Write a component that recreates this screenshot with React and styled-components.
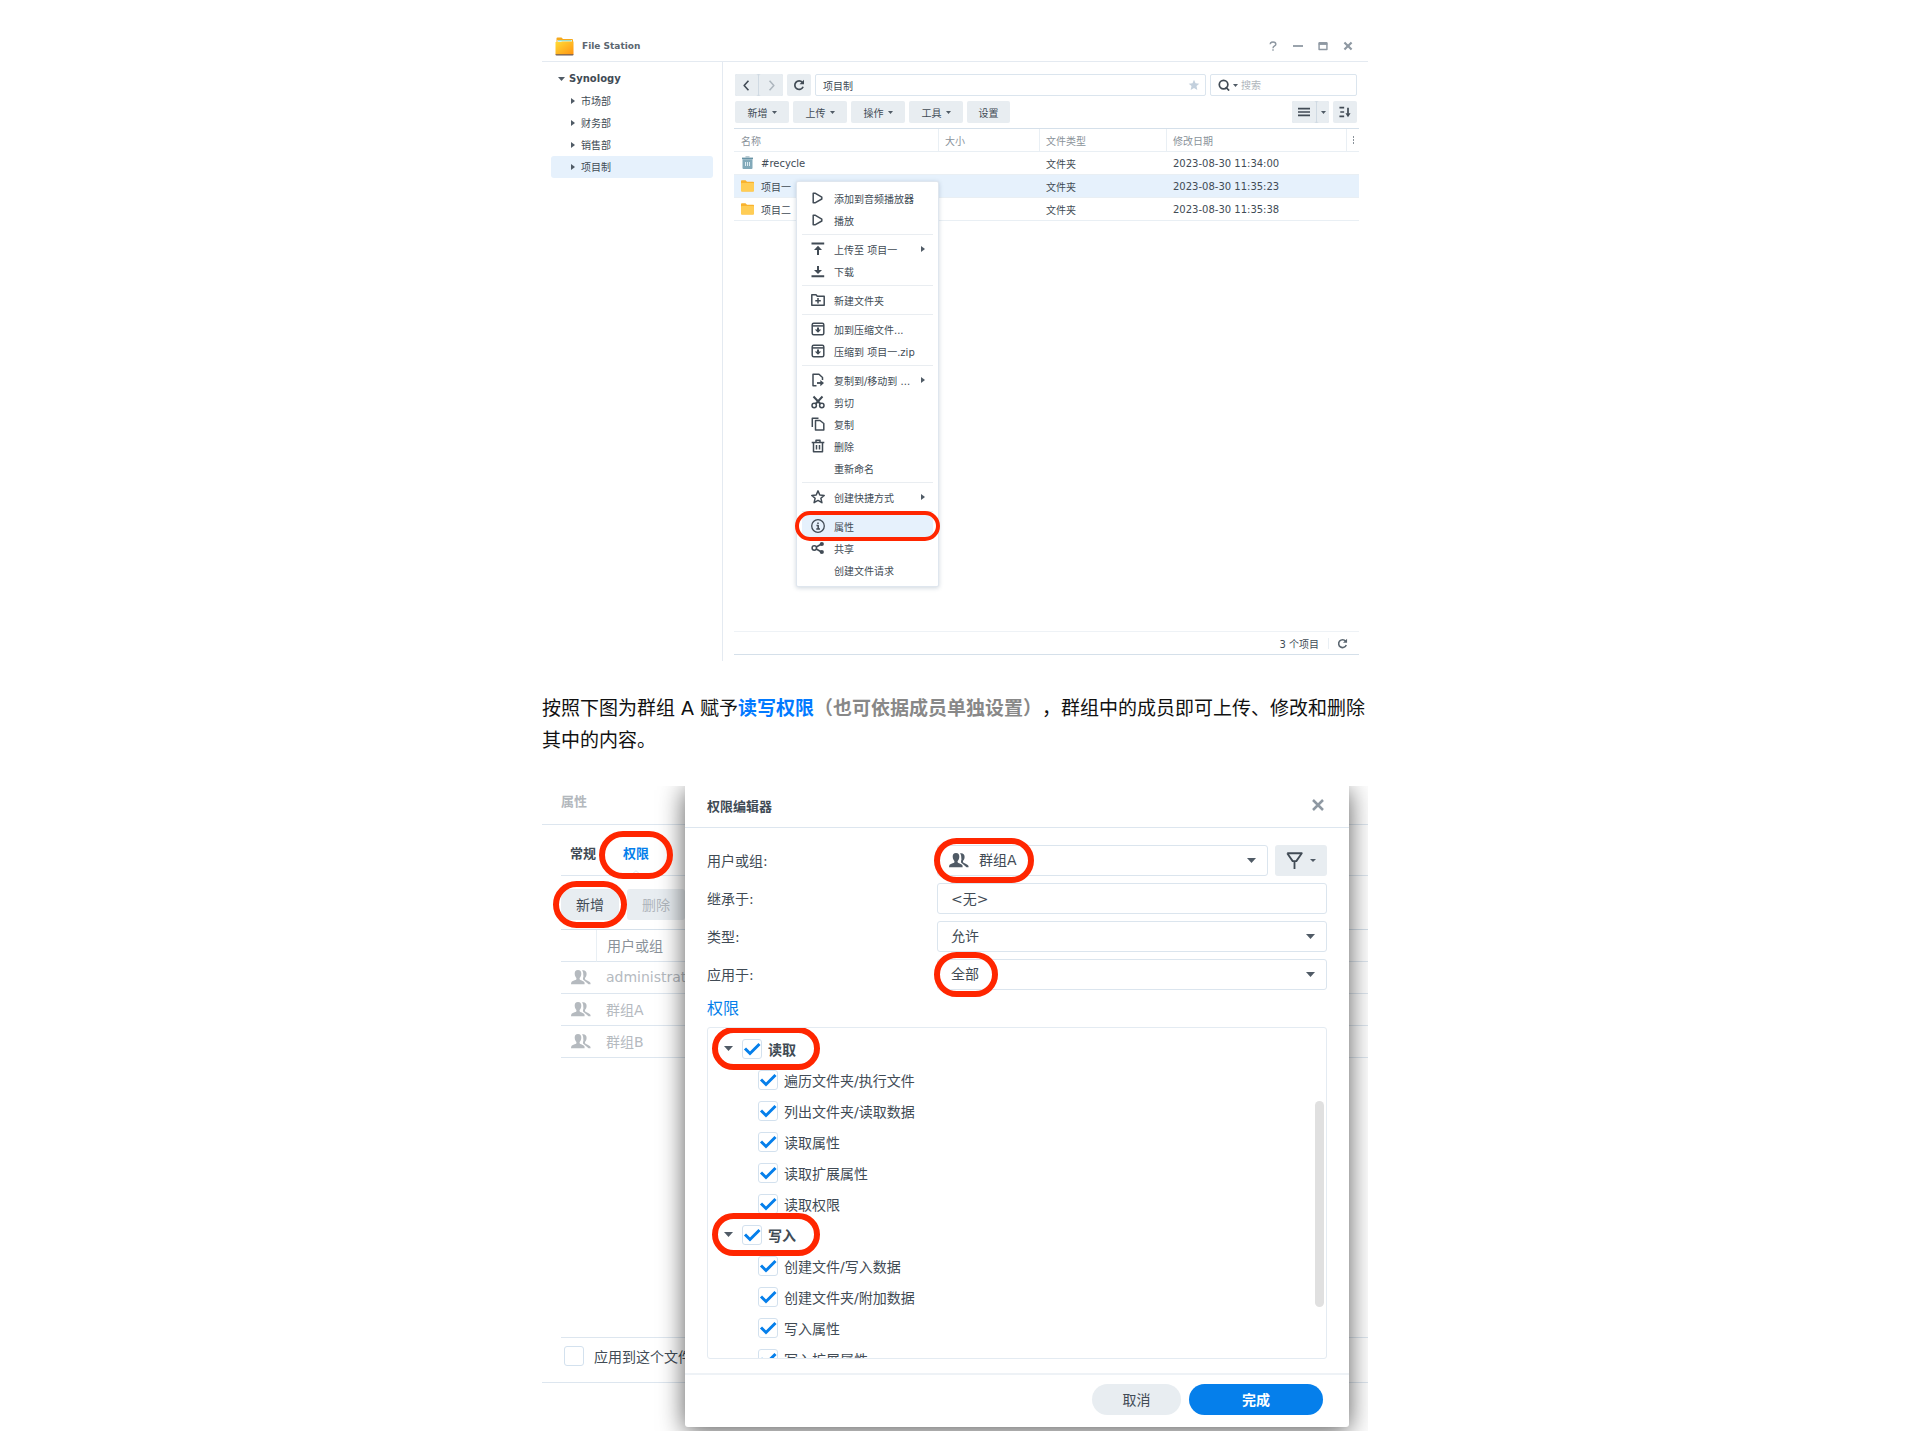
import React from 'react';
import styled, { createGlobalStyle, css } from 'styled-components';

const GlobalStyle = createGlobalStyle`
  * {
    box-sizing: border-box;
  }

  body {
    margin: 0;
    background: #fff;
    color: #414b55;
    font-family: 'DejaVu Sans', 'Noto Sans CJK SC', sans-serif;
    font-size: 10px;
  }

  button,
  input,
  select {
    margin: 0;
    padding: 0;
    border: 0;
    background: none;
    color: inherit;
    font: inherit;
  }

  svg {
    display: block;
    flex: none;
  }
`;

const Page = styled.div`
  padding: 31px 4px 22px 0;
`;

const Article = styled.main`
  max-width: 826px;
  margin: 0 auto;
`;

const Paragraph = styled.p`
  margin: 31px 0 30px;
  color: #111;
  font-size: 19px;
  line-height: 32px;
  text-spacing-trim: space-all;
`;

const Blue = styled.strong`
  color: #027aff;
`;

const Grey = styled.strong`
  color: #888;
`;

const Ring = styled.span`
  position: absolute;
  z-index: 2;
  inset: ${({ $inset }) => $inset};
  width: ${({ $width }) => $width || 'auto'};
  border: ${({ $thin }) => ($thin ? 4 : 6)}px solid #ff2600;
  border-radius: 24px;
  pointer-events: none;
`;

/* ---------- File Station window ---------- */

const Window = styled.section`
  display: flex;
  flex-direction: column;
`;

const TitleBar = styled.header`
  display: flex;
  align-items: center;
  height: 31px;
  padding: 0 15px 0 13px;
  border-bottom: 1px solid #e4eaf1;
`;

const WindowTitle = styled.h2`
  flex: 1;
  margin: 0 0 0 8px;
  color: #5b6670;
  font-size: 9px;
`;

const WindowButtons = styled.div`
  display: flex;
  gap: 15px;
`;

const IconButton = styled.button`
  display: flex;
  align-items: center;
  justify-content: center;
  color: #8e98a2;
`;

const WindowBody = styled.div`
  display: flex;
  min-height: 599px;
`;

const Sidebar = styled.nav`
  width: 181px;
  padding: 6px 9px;
  border-right: 1px solid #e4eaf1;
`;

const TreeRow = styled.a`
  display: flex;
  align-items: center;
  gap: 6px;
  height: 22px;
  padding: 0 0 1px 20px;
  border-radius: 3px;
  background: ${({ $active }) => ($active ? '#e6f1fc' : 'transparent')};
  color: inherit;
  text-decoration: none;
`;

const TreeRoot = styled(TreeRow)`
  gap: 4px;
  padding-left: 7px;
  font-weight: bold;
`;

const FilePane = styled.div`
  position: relative;
  display: flex;
  flex: 1;
  flex-direction: column;
  padding: 12px 9px 6px 11px;
`;

const Toolbar = styled.div`
  display: flex;
  gap: 4px;
  margin: 0 2px 5px 1px;
`;

const ToolButton = styled.button`
  display: flex;
  align-items: center;
  justify-content: center;
  gap: 4px;
  width: ${({ $width }) => $width}px;
  height: 22px;
  border-radius: 2px;
  background: #e8edf1;
`;

const ButtonGroup = styled.div`
  display: flex;
  gap: 1px;
  border-radius: 2px;
  background: #d0dae3;
`;

const Spacer = styled.span`
  flex: 1;
`;

const AddressBox = styled.label`
  display: flex;
  flex: 1;
  align-items: center;
  min-width: 0;
  height: 22px;
  padding: 0 5px 0 7px;
  border: 1px solid #dbe5ee;
  border-radius: 2px;

  input {
    flex: 1;
    min-width: 0;
  }
`;

const SearchBox = styled(AddressBox)`
  flex: 0 0 147px;
  gap: 3px;

  input::placeholder {
    color: #b0b6bc;
  }
`;

const FileTable = styled.table`
  width: 100%;
  border-top: 1px solid #d5e0ea;
  border-spacing: 0;
  table-layout: fixed;

  th,
  td {
    height: 23px;
    padding: 0 0 0 7px;
    border-bottom: 1px solid #e9eff4;
    text-align: left;
  }

  th {
    color: #8a929a;
    font-weight: normal;
  }

  th + th {
    padding-left: 6px;
    border-left: 1px solid #e9eff4;
  }
`;

const FileRow = styled.tr`
  background: ${({ $active }) => ($active ? '#e6f1fc' : 'transparent')};
`;

const NameCell = styled.div`
  display: flex;
  align-items: center;
  gap: 7px;
`;

const StatusBar = styled.footer`
  display: flex;
  align-items: center;
  justify-content: flex-end;
  height: 24px;
  margin-top: auto;
  padding-right: 11px;
  border-top: 1px solid #eef2f6;
  border-bottom: 1px solid #d5e0ea;

  button {
    margin-left: 9px;
    padding-left: 8px;
    border-left: 1px solid #e9eff4;
    color: #5b6670;
  }
`;

/* ---------- context menu ---------- */

const Menu = styled.div`
  position: absolute;
  top: 119px;
  left: 73px;
  width: 143px;
  padding: 5px;
  border: 1px solid #dfe6ee;
  border-radius: 2px;
  background: #fff;
  box-shadow: 0 1px 4px rgba(60, 90, 120, 0.25);
`;

const MenuItem = styled.button`
  position: relative;
  display: flex;
  align-items: center;
  width: 100%;
  height: 22px;
  padding: 0 8px 0 9px;
  background: ${({ $active }) => ($active ? '#e6f1fc' : 'transparent')};
  text-align: left;
`;

const MenuIcon = styled.span`
  width: 14px;
  margin-right: 9px;
`;

const MenuLabel = styled.span`
  flex: 1;
  white-space: nowrap;
`;

const Divider = styled.hr`
  height: 1px;
  margin: 3px 0;
  border: 0;
  background: #e9edf1;
`;

/* ---------- property dialogs ---------- */

const Stage = styled.section`
  position: relative;
  display: flex;
  flex-direction: column;
  min-height: 645px;
  overflow: hidden;
  font-size: 14px;
`;

const BackTitle = styled.h3`
  height: 39px;
  margin: 0;
  padding: 0 19px;
  border-bottom: 1px solid #dde6ef;
  color: #b3b8bd;
  font-size: 13px;
  line-height: 32px;
`;

const Tabs = styled.div`
  display: flex;
  gap: 27px;
  height: 51px;
  margin-left: 19px;
  padding-left: 9px;
  border-bottom: 1px solid #dde6ef;
`;

const Tab = styled.button`
  position: relative;
  padding-top: 5px;
  font-size: 13px;
  font-weight: bold;
  color: ${({ $active }) => ($active ? '#057feb' : 'inherit')};
`;

const Notch = styled.svg`
  position: absolute;
  bottom: -1px;
  left: calc(50% - 6px);
`;

const BackTools = styled.div`
  display: flex;
  gap: 8px;
  margin: 13px 0 9px 19px;
`;

const BackButton = styled.button`
  position: relative;
  height: 31px;
  padding: 0 15px 2px;
  border-radius: 3px;
  background: #e8edf1;

  &:disabled {
    color: #b0b6bc;
  }
`;

const GroupTable = styled.table`
  margin-left: 19px;
  border-top: 1px solid #d5e0ea;
  border-spacing: 0;

  th,
  td {
    height: 32px;
    padding: 0 10px 1px;
    border-bottom: 1px solid #dde6ef;
    color: #b5babf;
    text-align: left;
    font-weight: normal;
  }

  th {
    color: #8a929a;
  }

  th:first-child,
  td:first-child {
    width: 35px;
    padding-right: 5px;
  }

  th + th {
    border-left: 1px solid #e9eff4;
  }
`;

const ApplyRow = styled.div`
  margin-top: auto;
  margin-bottom: 48px;
  padding-left: 19px;
  border-bottom: 1px solid #dde6ef;
`;

const ApplyLabel = styled.label`
  display: flex;
  align-items: center;
  gap: 10px;
  padding: 8px 3px 16px;
  border-top: 1px solid #dde6ef;
`;

const Editor = styled.form`
  position: absolute;
  top: 0;
  right: 19px;
  bottom: 4px;
  left: 143px;
  display: flex;
  flex-direction: column;
  border-radius: 0 0 3px 3px;
  background: #fff;
  box-shadow: 0 4px 26px rgba(0, 0, 0, 0.65);
`;

const EditorHeader = styled.header`
  display: flex;
  align-items: center;
  justify-content: space-between;
  height: 42px;
  padding: 0 24px 3px 22px;
  border-bottom: 1px solid #dde6ef;

  h3 {
    margin: 0;
    font-size: 13px;
  }
`;

const Fields = styled.div`
  display: grid;
  grid-template-columns: 230px 1fr;
  row-gap: 7px;
  align-items: center;
  padding: 17px 22px 0;

  > label {
    padding-bottom: 2px;
  }
`;

const FieldRow = styled.div`
  display: flex;
  gap: 7px;
`;

const Field = styled.div`
  position: relative;
  flex: 1;

  input,
  select {
    width: 100%;
    height: 31px;
    padding: 0 0 1px ${({ $icon }) => ($icon ? 41 : 13)}px;
    border: 1px solid #dbe5ee;
    border-radius: 3px;
    appearance: none;
  }
`;

const FieldIcon = styled.span`
  position: absolute;
  top: 8px;
  left: 12px;
`;

const FieldCaret = styled.span`
  position: absolute;
  top: 13px;
  right: 12px;
`;

const FilterButton = styled.button`
  display: flex;
  align-items: center;
  justify-content: center;
  gap: 7px;
  width: 52px;
  height: 31px;
  border-radius: 3px;
  background: #e8edf1;
`;

const Heading = styled.h4`
  margin: 7px 22px 6px;
  color: #057feb;
  font-size: 16px;
  font-weight: normal;
  line-height: 24px;
`;

const PermissionBox = styled.div`
  position: relative;
  flex: 1;
  min-height: 0;
  margin: 0 22px 14px;
  padding-top: 5px;
  overflow: hidden;
  border: 1px solid #e4ebf2;
  border-radius: 3px;
`;

const PermissionRow = styled.div`
  position: relative;
  display: flex;
  align-items: center;
  height: 31px;
  padding-left: ${({ $child }) => ($child ? 50 : 16)}px;
  font-weight: ${({ $child }) => ($child ? 'normal' : 'bold')};

  label {
    display: flex;
    align-items: center;
    gap: 6px;
    margin-left: ${({ $child }) => ($child ? 0 : 9)}px;
  }
`;

const ScrollThumb = styled.span`
  position: absolute;
  top: 73px;
  right: 2px;
  width: 9px;
  height: 206px;
  border-radius: 5px;
  background: #e0e0e0;
`;

const CheckWrap = styled.span`
  position: relative;
  width: 20px;
  height: 20px;

  input {
    display: block;
    width: 20px;
    height: 20px;
    border: 1px solid #d3e1ee;
    border-radius: 3px;
    appearance: none;
  }

  svg {
    position: absolute;
    inset: 0;
    pointer-events: none;
  }
`;

const EditorFooter = styled.footer`
  display: flex;
  gap: 8px;
  justify-content: flex-end;
  padding: 9px 26px 12px;
  border-top: 2px solid #eef2f6;
`;

const PillButton = styled.button`
  width: 89px;
  height: 31px;
  padding-bottom: 1px;
  border-radius: 16px;
  background: #e8edf1;

  ${({ $primary }) => $primary && css`
    width: 134px;
    background: #057feb;
    color: #fff;
    font-weight: bold;
  `}
`;

/* ---------- icons ---------- */

const Caret = ({ size = 5, right }) => {
  const depth = Math.ceil(size / 2);

  return right ? (
    <svg width="4" height="6" viewBox="0 0 4 6">
      <path d="M0 0L4 3L0 6Z" fill="#505b66" />
    </svg>
  ) : (
    <svg width={size} height={depth} viewBox="0 0 8 4" preserveAspectRatio="none">
      <path d="M0 0H8L4 4Z" fill="#505b66" />
    </svg>
  );
};

const Glyph = ({ size = 14, width = 1.5, children }) => (
  <svg width={size} height={size} viewBox="0 0 14 14" fill="none" stroke="currentColor" strokeWidth={width} strokeLinejoin="round">
    {children}
  </svg>
);

const ReloadIcon = ({ size = 12 }) => (
  <Glyph size={size} width={2}>
    <path d="M11 4A5 5 0 1 0 11.8 9" />
    <path d="M12.8 1v5.2H7.6z" fill="currentColor" stroke="none" />
  </Glyph>
);

const CloseIcon = ({ size, width = 3 }) => (
  <Glyph size={size} width={width}><path d="M2 2L12 12M12 2L2 12" /></Glyph>
);

const PeopleIcon = ({ color = '#505b66' }) => (
  <svg width="20" height="15" viewBox="0 0 20 15" fill={color}>
    <path d="M7 0C4.600 0 3.600 1.600 3.700 3.700C3.800 5.700 4.600 7.200 5.400 7.900V9.200C4.800 10.300 1 10.600 .3 12.400C0 13.200 0 14.300 0 14.300H13.600C13.600 14.300 13.700 12.900 13.300 12.100C12.500 10.700 9 10.200 8.600 9.200V7.900C9.500 7.200 10.300 5.600 10.300 3.700C10.400 1.500 9.400 0 7 0Z" />
    <path d="M11 .3C13.600-.3 15.700 .9 15.600 4C15.500 6.100 14.700 7.300 14 8V9C14.500 10.200 18.600 11.200 19.500 13V14.300H17.500L12 9.400V7.700C12.600 7.100 12.400 6 12.300 5C12.300 3 12 1.400 11 .3Z" />
  </svg>
);

const FolderIcon = () => (
  <svg width="13" height="12" viewBox="0 0 13 12">
    <path d="M0 1.200Q0 .3 .8 .3H4.500L6 1.800H12.300Q13 1.800 13 2.500V10Q13 11.500 12 11.500H1Q0 11.500 0 10Z" fill="#f9b32e" />
    <path d="M0 3.700Q0 3 .8 3H12.300Q13 3 13 3.700V10.500Q13 11.500 12 11.500H1Q0 11.500 0 10.500Z" fill="#ffcd55" />
  </svg>
);

const TrashCanIcon = () => (
  <svg width="13" height="14" viewBox="0 0 13 14">
    <path d="M4.500 .4H8.500V1.300H4.500Z" fill="#8ba9b6" />
    <path d="M1 1.600H12V3.200H1Z" fill="#6893a5" />
    <path d="M1.500 3.200H11.500V12Q11.500 13 10.500 13H2.500Q1.500 13 1.500 12Z" fill="#82a9b9" />
    <path d="M4.500 6V10M6.500 6V10M8.500 6V10" stroke="#dcebf1" />
  </svg>
);

const AppIcon = () => (
  <svg width="19" height="19" viewBox="0 0 19 19">
    <defs>
      <linearGradient id="folder" x1="0" y1="0" x2="1" y2="1">
        <stop offset="0" stopColor="#ffdc35" />
        <stop offset="1" stopColor="#ff9412" />
      </linearGradient>
    </defs>
    <path d="M1.500 1.500Q1.500 .5 2.500 .5H6.500L8 2H17Q18 2 18 3V7H1.500Z" fill="#f5a91d" />
    <path d="M2.500 3H17V7H2.500Z" fill="#fff" />
    <path d="M3 3.800H16.500" stroke="#6fd0b4" />
    <path d="M.5 17H18.500V17.500Q18.500 18.500 17.500 18.500H1.500Q.5 18.500 .5 17.500Z" fill="#6b5a59" />
    <path d="M.5 5H6L7 4.500H18.500V17.300H.5Z" fill="url(#folder)" />
  </svg>
);

const StarPath = 'M7 .9L8.800 5L13.200 5.400L9.900 8.300L10.900 12.700L7 10.400L3.100 12.700L4.100 8.300L.8 5.400L5.200 5Z';

const icons = {
  play: <path d="M2.200 2.200V11.800H4L10.800 8V6.200L4 2.200Z" />,
  upload: (
    <>
      <path d="M.5 1.500H13.200M7 13V7" strokeWidth="2" />
      <path d="M7 3.800L11 8H3Z" fill="currentColor" stroke="none" />
    </>
  ),
  download: (
    <>
      <path d="M.5 12.300H13.200M7 2V7" strokeWidth="2" />
      <path d="M7 10L3 6H11Z" fill="currentColor" stroke="none" />
    </>
  ),
  folder: (
    <>
      <path d="M.8 1.800H5L6.300 3.300H13.200V12.300H.8Z" />
      <path d="M7 5V10.500M4.300 7.800H9.800" />
    </>
  ),
  archive: (
    <>
      <rect x="1.200" y="1.300" width="11.600" height="11.500" rx="1.500" />
      <path d="M1.200 3.900H12.800" />
      <path d="M7 5.500V10" strokeWidth="2" />
      <path d="M7 10.800L3.800 7.500H10.200Z" fill="currentColor" stroke="none" />
    </>
  ),
  move: (
    <>
      <path d="M5.500 12.700H2V1.300H8L11.500 4.500V7" />
      <path d="M6 10H10" strokeWidth="1.800" />
      <path d="M9.300 6.900L13 10L9.300 13.200Z" fill="currentColor" stroke="none" />
    </>
  ),
  cut: (
    <>
      <circle cx="3.200" cy="10.500" r="2.200" />
      <circle cx="10.800" cy="10.500" r="2.200" />
      <path d="M2.500 1.500L9.500 9M11.500 1.500L4.500 9" strokeWidth="2" />
    </>
  ),
  copy: (
    <>
      <path d="M4.500 3.500H9L12.800 6.500V13H4.500Z" />
      <path d="M1.300 10V1.200H7.500" />
    </>
  ),
  trash: (
    <>
      <path d="M.7 3.500H13.300M5 3V1.300H9V3M2.500 3.500V12.700H11.500V3.500" />
      <path d="M5.500 6V10.500M8.500 6V10.500" />
    </>
  ),
  star: <path d={StarPath} />,
  info: (
    <>
      <circle cx="7" cy="7" r="6.300" strokeWidth="1.300" />
      <path d="M5.500 6.500H7.200V9.800M5.300 10H9M7 3.500V5" />
    </>
  ),
  share: (
    <>
      <circle cx="3.300" cy="7" r="2.200" />
      <path d="M5.300 6L10.500 3M5.300 8L10.500 11" />
      <circle cx="10.800" cy="3" r="2.100" fill="currentColor" stroke="none" />
      <circle cx="10.800" cy="11" r="2.100" fill="currentColor" stroke="none" />
    </>
  ),
};

/* ---------- data ---------- */

const menuGroups = [
  [{ icon: 'play', label: '添加到音频播放器' }, { icon: 'play', label: '播放' }],
  [{ icon: 'upload', label: '上传至 项目一', sub: true }, { icon: 'download', label: '下载' }],
  [{ icon: 'folder', label: '新建文件夹' }],
  [{ icon: 'archive', label: '加到压缩文件...' }, { icon: 'archive', label: '压缩到 项目一.zip' }],
  [
    { icon: 'move', label: '复制到/移动到 ...', sub: true },
    { icon: 'cut', label: '剪切' },
    { icon: 'copy', label: '复制' },
    { icon: 'trash', label: '删除' },
    { label: '重新命名' },
  ],
  [{ icon: 'star', label: '创建快捷方式', sub: true }],
  [{ icon: 'info', label: '属性', active: true }, { icon: 'share', label: '共享' }, { label: '创建文件请求' }],
];

const files = [
  { name: '#recycle', date: '2023-08-30 11:34:00', icon: <TrashCanIcon /> },
  { name: '项目一', date: '2023-08-30 11:35:23', icon: <FolderIcon />, active: true },
  { name: '项目二', date: '2023-08-30 11:35:38', icon: <FolderIcon /> },
];

const permissions = [
  { title: '读取', items: ['遍历文件夹/执行文件', '列出文件夹/读取数据', '读取属性', '读取扩展属性', '读取权限'] },
  { title: '写入', items: ['创建文件/写入数据', '创建文件夹/附加数据', '写入属性', '写入扩展属性'] },
];

/* ---------- parts ---------- */

const Check = ({ checked }) => (
  <CheckWrap>
    <input type="checkbox" defaultChecked={checked} />
    {checked && (
      <svg width="20" height="20" viewBox="0 0 20 20" fill="none">
        <path d="M3 9.500L8 14.500L17.500 5" stroke="#057feb" strokeWidth="3" />
      </svg>
    )}
  </CheckWrap>
);

const ContextMenu = () => (
  <Menu>
    {menuGroups.map((group, index) => (
      <React.Fragment key={group[0].label}>
        {index > 0 && <Divider />}
        {group.map(({ icon, label, sub, active }) => (
          <MenuItem key={label} type="button" $active={active}>
            <MenuIcon>{icon && <Glyph>{icons[icon]}</Glyph>}</MenuIcon>
            <MenuLabel>{label}</MenuLabel>
            {sub && <Caret right />}
            {active && <Ring $thin $inset="-4px -7px" />}
          </MenuItem>
        ))}
      </React.Fragment>
    ))}
  </Menu>
);

const FileStation = () => (
  <Window>
    <TitleBar>
      <AppIcon />
      <WindowTitle>File Station</WindowTitle>
      <WindowButtons>
        <IconButton type="button" aria-label="帮助">
          <Glyph size={10} width={2}>
            <path d="M3 4.500C3 .3 11 .3 11 4.500C11 7 7 6.500 7 10M7 11.500V13.700" />
          </Glyph>
        </IconButton>
        <IconButton type="button" aria-label="最小化">
          <Glyph size={10} width={2.500}><path d="M0 7H14" /></Glyph>
        </IconButton>
        <IconButton type="button" aria-label="最大化">
          <Glyph size={10} width={2}>
            <path d="M1.500 3H12.500V12H1.500Z" />
            <path d="M1 3.500H13" strokeWidth="4" />
          </Glyph>
        </IconButton>
        <IconButton type="button" aria-label="关闭"><CloseIcon size={10} /></IconButton>
      </WindowButtons>
    </TitleBar>
    <WindowBody>
      <Sidebar>
        <TreeRoot href="#synology">
          <Caret size={7} />
          Synology
        </TreeRoot>
        {['市场部', '财务部', '销售部', '项目制'].map((name) => (
          <TreeRow key={name} href={`#${name}`} $active={name === '项目制'}>
            <Caret right />
            {name}
          </TreeRow>
        ))}
      </Sidebar>
      <FilePane>
        <Toolbar>
          <ButtonGroup>
            <ToolButton type="button" $width={23} aria-label="后退">
              <Glyph size={11} width={2}><path d="M9.500 1L4 7L9.500 13" /></Glyph>
            </ToolButton>
            <ToolButton type="button" $width={24} aria-label="前进">
              <Glyph size={11} width={2}><path d="M4.500 1L10 7L4.500 13" stroke="#adb6be" /></Glyph>
            </ToolButton>
          </ButtonGroup>
          <ToolButton type="button" $width={24} aria-label="刷新"><ReloadIcon /></ToolButton>
          <AddressBox>
            <input aria-label="路径" defaultValue="项目制" />
            <svg width="12" height="12" viewBox="0 0 14 14"><path d={StarPath} fill="#c3d0dd" /></svg>
          </AddressBox>
          <SearchBox>
            <Glyph size={12} width={2}>
              <circle cx="6.500" cy="6.500" r="5" />
              <path d="M9 9.500L13 13.500" />
            </Glyph>
            <Caret />
            <input aria-label="搜索" placeholder="搜索" />
          </SearchBox>
        </Toolbar>
        <Toolbar>
          {['新增', '上传', '操作', '工具'].map((label) => (
            <ToolButton key={label} type="button" $width={54}>
              {label}
              <Caret />
            </ToolButton>
          ))}
          <ToolButton type="button" $width={43}>设置</ToolButton>
          <Spacer />
          <ButtonGroup>
            <ToolButton type="button" $width={24} aria-label="列表视图">
              <Glyph size={12} width={2}><path d="M0 3H14M0 7H14M0 11H14" /></Glyph>
            </ToolButton>
            <ToolButton type="button" $width={12} aria-label="视图选项"><Caret /></ToolButton>
          </ButtonGroup>
          <ToolButton type="button" $width={24} aria-label="排序">
            <Glyph size={12} width={2}>
              <path d="M.5 2H6M1.500 7H6M.5 12H6M10.500 2V9" />
              <path d="M7.500 8.500H13.500L10.500 13Z" fill="currentColor" stroke="none" />
            </Glyph>
          </ToolButton>
        </Toolbar>
        <FileTable>
          <colgroup>
            <col width="204" />
            <col width="101" />
            <col width="127" />
            <col />
            <col width="13" />
          </colgroup>
          <thead>
            <tr>
              <th>名称</th>
              <th>大小</th>
              <th>文件类型</th>
              <th>修改日期</th>
              <th aria-label="更多">
                <svg width="1" height="8" viewBox="0 0 1 8"><path d="M.5 0V8" stroke="#8a929a" strokeWidth="1" strokeDasharray="2 1" /></svg>
              </th>
            </tr>
          </thead>
          <tbody>
            {files.map(({ name, date, icon, active }) => (
              <FileRow key={name} $active={active}>
                <td>
                  <NameCell>
                    {icon}
                    {name}
                  </NameCell>
                </td>
                <td />
                <td>文件夹</td>
                <td>{date}</td>
                <td />
              </FileRow>
            ))}
          </tbody>
        </FileTable>
        <StatusBar>
          3 个项目
          <button type="button" aria-label="重新加载"><ReloadIcon size={11} /></button>
        </StatusBar>
        <ContextMenu />
      </FilePane>
    </WindowBody>
  </Window>
);

const PermissionEditor = () => (
  <Editor>
    <EditorHeader>
      <h3>权限编辑器</h3>
      <IconButton type="button" aria-label="关闭"><CloseIcon size={14} width={2.500} /></IconButton>
    </EditorHeader>
    <Fields>
      <label htmlFor="owner">用户或组:</label>
      <FieldRow>
        <Field $icon>
          <select id="owner"><option>群组A</option></select>
          <FieldIcon><PeopleIcon /></FieldIcon>
          <FieldCaret><Caret size={9} /></FieldCaret>
          <Ring $inset="-7px auto -7px -3px" $width="100px" />
        </Field>
        <FilterButton type="button" aria-label="筛选">
          <Glyph size={17} width={1.500}><path d="M1 1H13L8.500 7.500H5.500L1 1M7 7.500V14" /></Glyph>
          <Caret size={6} />
        </FilterButton>
      </FieldRow>
      <label htmlFor="inherit">继承于:</label>
      <Field><input id="inherit" defaultValue="<无>" readOnly /></Field>
      <label htmlFor="kind">类型:</label>
      <Field>
        <select id="kind"><option>允许</option></select>
        <FieldCaret><Caret size={9} /></FieldCaret>
      </Field>
      <label htmlFor="scope">应用于:</label>
      <Field>
        <select id="scope"><option>全部</option></select>
        <FieldCaret><Caret size={9} /></FieldCaret>
        <Ring $inset="-7px auto -7px -3px" $width="64px" />
      </Field>
    </Fields>
    <Heading>权限</Heading>
    <PermissionBox>
      {permissions.map(({ title, items }) => (
        <React.Fragment key={title}>
          <PermissionRow>
            <Caret size={9} />
            <label>
              <Check checked />
              {title}
            </label>
            <Ring $inset="-6px auto -6px 4px" $width="108px" />
          </PermissionRow>
          {items.map((item) => (
            <PermissionRow key={item} $child>
              <label>
                <Check checked />
                {item}
              </label>
            </PermissionRow>
          ))}
        </React.Fragment>
      ))}
      <ScrollThumb />
    </PermissionBox>
    <EditorFooter>
      <PillButton type="button">取消</PillButton>
      <PillButton type="button" $primary>完成</PillButton>
    </EditorFooter>
  </Editor>
);

const Properties = () => (
  <Stage>
    <BackTitle>属性</BackTitle>
    <Tabs>
      <Tab type="button">常规</Tab>
      <Tab type="button" $active>
        权限
        <Notch width="12" height="6" viewBox="0 0 12 6">
          <path d="M0 6L6 .7L12 6" fill="#fff" stroke="#dde6ef" />
        </Notch>
        <Ring $inset="6px -24px -4px" />
      </Tab>
    </Tabs>
    <BackTools>
      <BackButton type="button">
        新增
        <Ring $inset="-8px" />
      </BackButton>
      <BackButton type="button" disabled>删除</BackButton>
    </BackTools>
    <GroupTable>
      <thead>
        <tr>
          <th aria-label="类型" />
          <th>用户或组</th>
        </tr>
      </thead>
      <tbody>
        {['administrators', '群组A', '群组B'].map((name) => (
          <tr key={name}>
            <td><PeopleIcon color="#b5babf" /></td>
            <td>{name}</td>
          </tr>
        ))}
      </tbody>
    </GroupTable>
    <ApplyRow>
      <ApplyLabel>
        <Check />
        应用到这个文件夹
      </ApplyLabel>
    </ApplyRow>
    <PermissionEditor />
  </Stage>
);

const App = () => (
  <Page>
    <GlobalStyle />
    <Article>
      <FileStation />
      <Paragraph>
        按照下图为群组 A 赋予
        <Blue>读写权限</Blue>
        <Grey>（也可依据成员单独设置）</Grey>
        ，群组中的成员即可上传、修改和删除其中的内容。
      </Paragraph>
      <Properties />
    </Article>
  </Page>
);

export default App;
